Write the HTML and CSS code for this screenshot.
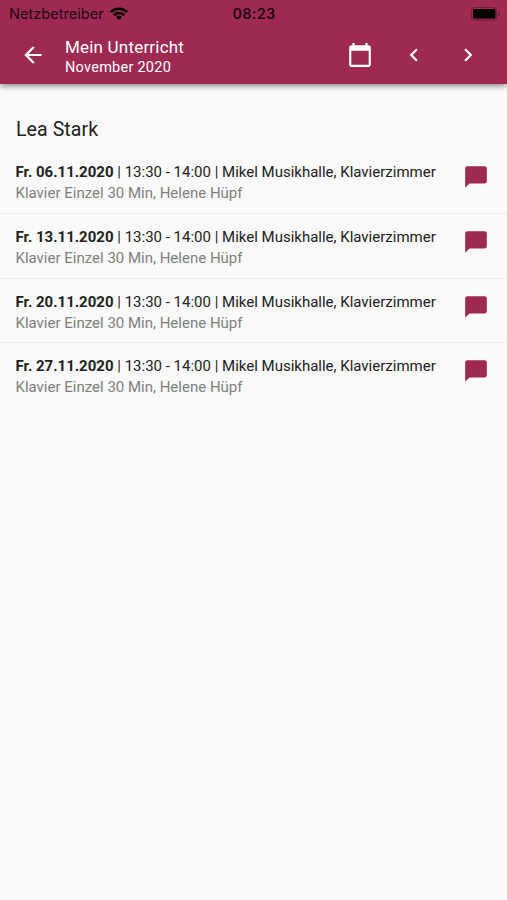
FILE: index.html
```html
<!DOCTYPE html>
<html lang="de">
<head>
    <meta charset="UTF-8">
    <meta name="viewport" content="width=device-width, initial-scale=1.0">
    <title>Mein Unterricht</title>
    <link rel="stylesheet" href="styles.css">
</head>
<body>
    <header class="app-bar">
        <div class="status-bar">
            <div class="carrier">
                <span class="carrier-name">Netzbetreiber</span>
                <svg class="wifi" viewBox="0 0 18 13">
                    <path d="M0 4.2a12.7 12.7 0 0 1 18 0L16.2 6a10.2 10.2 0 0 0-14.4 0z"/>
                    <path d="M3 7.2a8.5 8.5 0 0 1 12 0L13.2 9a6 6 0 0 0-8.4 0z"/>
                    <path d="M6 10.1a4.3 4.3 0 0 1 6 0L9 13z"/>
                </svg>
            </div>
            <span class="clock">08:23</span>
            <svg class="battery" viewBox="0 0 30 14">
                <rect x="0.5" y="0.5" width="25" height="12.5" rx="3" fill="none" stroke="#6c1d3a"/>
                <rect x="2" y="2" width="22.500" height="9.500" rx="1.500"/>
                <path d="M27 4.5v4.600c1-.4 1.700-1.200 1.700-2.300S28 4.900 27 4.500z" fill="#6c1d3a"/>
            </svg>
        </div>
        <div class="toolbar">
            <svg class="icon back" viewBox="0 0 24 24"><path d="M20 11H7.830l5.590-5.590L12 4l-8 8 8 8 1.410-1.410L7.830 13H20v-2z"/></svg>
            <div class="titles">
                <h1>Mein Unterricht</h1>
                <p>November 2020</p>
            </div>
            <svg class="icon" viewBox="0 0 24 24"><path d="M20 3h-1V1h-2v2H7V1H5v2H4c-1.100 0-2 .9-2 2v16c0 1.100.9 2 2 2h16c1.100 0 2-.9 2-2V5c0-1.100-.9-2-2-2zm0 18H4V8h16v13z"/></svg>
            <svg class="icon" viewBox="0 0 24 24"><path d="M15.410 7.410L14 6l-6 6 6 6 1.410-1.410L10.830 12z"/></svg>
            <svg class="icon" viewBox="0 0 24 24"><path d="M10 6L8.590 7.410 13.170 12l-4.580 4.590L10 18l6-6z"/></svg>
        </div>
    </header>

    <main>
        <h2>Lea Stark</h2>
        <ul class="lessons">
            <li class="lesson">
                <div class="lesson-text">
                    <p class="date"><b>Fr. 06.11.2020</b> <span>| 13:30 - 14:00 | Mikel Musikhalle, Klavierzimmer</span></p>
                    <p class="course">Klavier Einzel 30 Min, Helene Hüpf</p>
                </div>
                <svg class="chat" viewBox="0 0 24 24"><path d="M20 2H4c-1.100 0-1.990.9-1.990 2L2 22l4-4h14c1.100 0 2-.9 2-2V4c0-1.100-.9-2-2-2z"/></svg>
            </li>
            <li class="lesson">
                <div class="lesson-text">
                    <p class="date"><b>Fr. 13.11.2020</b> <span>| 13:30 - 14:00 | Mikel Musikhalle, Klavierzimmer</span></p>
                    <p class="course">Klavier Einzel 30 Min, Helene Hüpf</p>
                </div>
                <svg class="chat" viewBox="0 0 24 24"><path d="M20 2H4c-1.100 0-1.990.9-1.990 2L2 22l4-4h14c1.100 0 2-.9 2-2V4c0-1.100-.9-2-2-2z"/></svg>
            </li>
            <li class="lesson">
                <div class="lesson-text">
                    <p class="date"><b>Fr. 20.11.2020</b> <span>| 13:30 - 14:00 | Mikel Musikhalle, Klavierzimmer</span></p>
                    <p class="course">Klavier Einzel 30 Min, Helene Hüpf</p>
                </div>
                <svg class="chat" viewBox="0 0 24 24"><path d="M20 2H4c-1.100 0-1.990.9-1.990 2L2 22l4-4h14c1.100 0 2-.9 2-2V4c0-1.100-.9-2-2-2z"/></svg>
            </li>
            <li class="lesson">
                <div class="lesson-text">
                    <p class="date"><b>Fr. 27.11.2020</b> <span>| 13:30 - 14:00 | Mikel Musikhalle, Klavierzimmer</span></p>
                    <p class="course">Klavier Einzel 30 Min, Helene Hüpf</p>
                </div>
                <svg class="chat" viewBox="0 0 24 24"><path d="M20 2H4c-1.100 0-1.990.9-1.990 2L2 22l4-4h14c1.100 0 2-.9 2-2V4c0-1.100-.9-2-2-2z"/></svg>
            </li>
        </ul>
    </main>
</body>
</html>
```
FILE: styles.css
```css
:root {
    --primary-color: #9e2a53;
    --background-color: #fafafa;
    --status-color: #210612;
}

* {
    margin: 0;
    padding: 0;
    box-sizing: border-box;
}

body {
    background-color: var(--background-color);
    color: #212121;
    font-family: Roboto, sans-serif;
    min-height: 100vh;
}

.app-bar {
    height: 84px;
    background-color: var(--primary-color);
    box-shadow: 0 2px 6px rgba(0, 0, 0, 0.45);
}

.status-bar {
    display: grid;
    grid-template-columns: 1fr auto 1fr;
    align-items: center;
    height: 27px;
    padding: 0 6px 0 9px;
    color: var(--status-color);
    font-family: Inter, sans-serif;
    font-size: 14.6px;
}

.carrier {
    display: flex;
    align-items: center;
    gap: 6px;
}

.wifi {
    width: 18px;
    height: 13px;
    fill: #000;
}

.clock {
    margin-right: 2px;
    font-weight: 600;
    font-size: 14.5px;
    letter-spacing: 0.3px;
}

.battery {
    width: 30px;
    height: 14px;
    justify-self: end;
}

.toolbar {
    display: flex;
    align-items: center;
    height: 56px;
    padding: 0 26px 0 20px;
    gap: 28px;
    color: #fff;
}

.icon {
    width: 26px;
    height: 26px;
    fill: currentColor;
    flex: none;
}

.back {
    margin-right: -9px;
}

.titles {
    flex: 1;
    padding-top: 4px;
}

.titles h1 {
    font-size: 17px;
    font-weight: 400;
    line-height: 21px;
    letter-spacing: 0.2px;
}

.titles p {
    font-size: 14.5px;
    line-height: 20px;
    letter-spacing: 0.25px;
}

h2 {
    padding: 33px 16px 0;
    font-size: 19.5px;
    font-weight: 400;
    line-height: 26px;
    letter-spacing: 0.1px;
}

.lessons {
    list-style: none;
    padding-top: 6px;
}

.lesson {
    display: flex;
    justify-content: space-between;
    align-items: flex-start;
    height: 64.75px;
    padding: 13px 18.5px 0 15.5px;
    border-bottom: 1px solid #ebebeb;
}

.lesson:last-child {
    border-bottom: none;
}

.lesson-text {
    font-size: 15px;
    line-height: 21px;
    white-space: nowrap;
}

.course {
    color: #808080;
}

.chat {
    width: 26px;
    height: 26px;
    margin-top: 2px;
    fill: var(--primary-color);
}
```
